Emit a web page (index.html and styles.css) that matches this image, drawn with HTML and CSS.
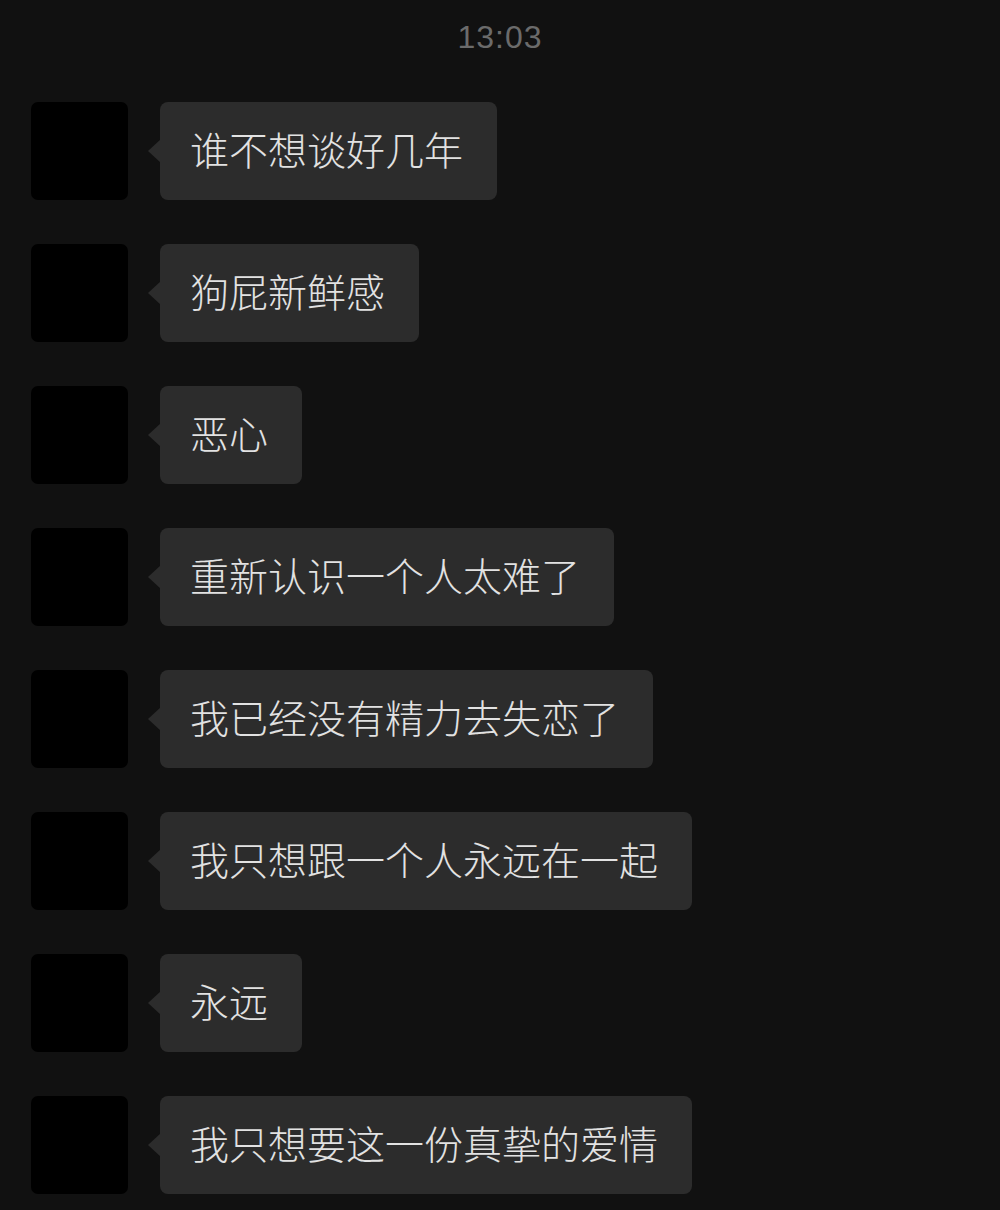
FILE: index.html
```html
<!DOCTYPE html>
<html lang="zh-CN">
<head>
  <meta charset="UTF-8">
  <meta name="viewport" content="width=device-width,initial-scale=1">
  <title>Chat</title>
  <link rel="stylesheet" href="styles.css">
</head>
<body>
  <div class="chat">
    <div class="time">13:03</div>

    <div class="msg">
      <div class="avatar"></div>
      <div class="bubble">谁不想谈好几年</div>
    </div>
    <div class="msg">
      <div class="avatar"></div>
      <div class="bubble">狗屁新鲜感</div>
    </div>
    <div class="msg">
      <div class="avatar"></div>
      <div class="bubble">恶心</div>
    </div>
    <div class="msg">
      <div class="avatar"></div>
      <div class="bubble">重新认识一个人太难了</div>
    </div>
    <div class="msg">
      <div class="avatar"></div>
      <div class="bubble">我已经没有精力去失恋了</div>
    </div>
    <div class="msg">
      <div class="avatar"></div>
      <div class="bubble">我只想跟一个人永远在一起</div>
    </div>
    <div class="msg">
      <div class="avatar"></div>
      <div class="bubble">永远</div>
    </div>
    <div class="msg">
      <div class="avatar"></div>
      <div class="bubble">我只想要这一份真挚的爱情</div>
    </div>
  </div>
</body>
</html>
```

FILE: styles.css
```css
:root {
  --bg-main: #111111;
  --bubble: #2c2c2c;
  --text: #e2e2e2;
  --time: #6b6b6b;
}
* { margin:0; padding:0; box-sizing:border-box; }
html, body { height:100%; background:var(--bg-main); overflow:hidden; }
body { font-family:"Noto Sans CJK SC","Noto Sans",sans-serif; }

/* CHAT */
.chat {
  display:flex; flex-direction:column; gap:44px;
  padding:0 0 0 31px;
}
.time {
  height:58px;
  margin-top:15px;
  margin-bottom:-15px;
  text-align:center;
  margin-left:-31px;
  font-family:"Liberation Sans","Noto Sans",sans-serif;
  font-size:32px;
  letter-spacing:1px;
  line-height:44px;
  color:var(--time);
}

/* MESSAGE ROW */
.msg {
  display:flex; align-items:flex-start; gap:32px;
  height:98px;
}
.avatar {
  width:97px; height:98px;
  background:#000;
  border-radius:7px;
  flex:none;
}
.bubble {
  position:relative;
  height:98px;
  display:flex; align-items:center;
  padding:0 34px 6px 30px;
  background:var(--bubble);
  border-radius:8px;
  color:var(--text);
  font-size:39px;
  font-weight:300;
  line-height:1;
  white-space:nowrap;
}
.bubble::before {
  content:"";
  position:absolute;
  left:-12px; top:50%;
  transform:translateY(-50%);
  border-style:solid;
  border-width:12px 13px 12px 0;
  border-color:transparent var(--bubble) transparent transparent;
}
```
